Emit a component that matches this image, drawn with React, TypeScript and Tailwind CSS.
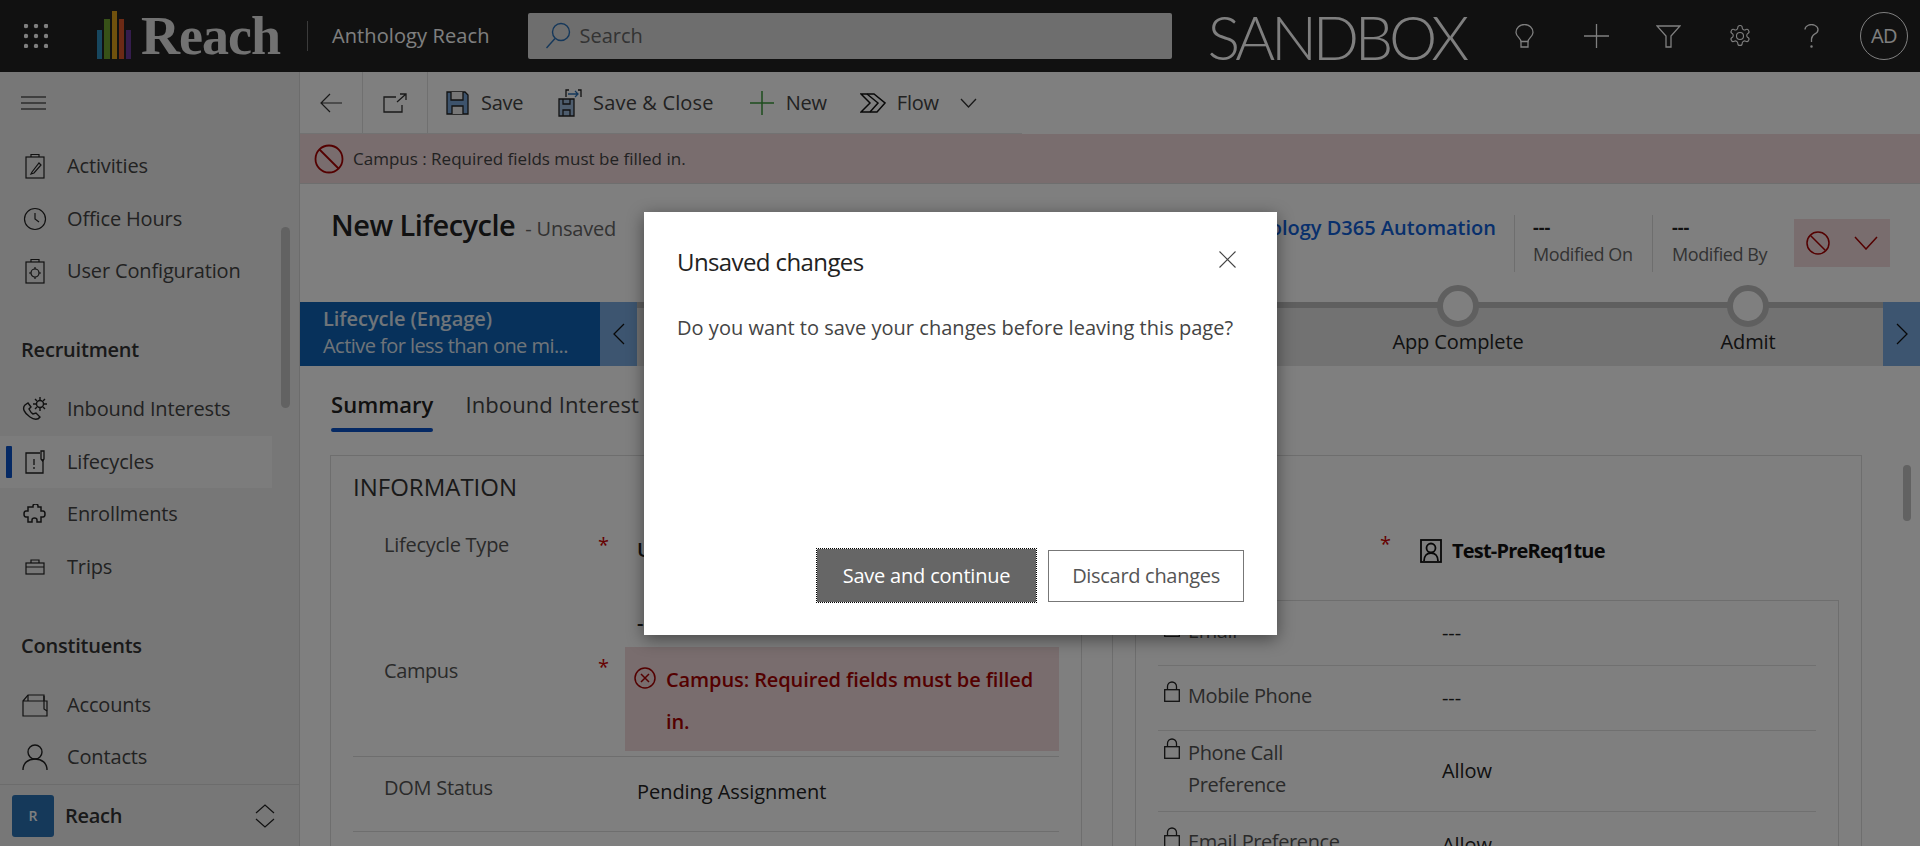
import React from "react";

const Ico = ({ s = 24, className = "", children, w, h, sw = 1.2 }: any) => (
  <svg width={w ?? s} height={h ?? s} viewBox={`0 0 ${w ?? s} ${h ?? s}`} fill="none" stroke="currentColor" strokeWidth={sw} className={className}>
    {children}
  </svg>
);

const NavItem = ({ label, active, icon }: { label: string; active?: boolean; icon: React.ReactNode }) => (
  <div className={`flex h-[52.5px] w-[272px] items-center ${active ? "bg-[#f9f9f9]" : ""}`}>
    <div className={`ml-[6px] h-[32px] w-[6px] rounded-[1px] ${active ? "bg-[#0a52c8]" : ""}`} />
    <div className="flex w-[55px] justify-center pr-[9px] text-[#222]">{icon}</div>
    <span className="text-[20px] text-[#444] tracking-[-0.15px]">{label}</span>
  </div>
);

const Lock = () => (
  <svg width="16" height="21" viewBox="0 0 16 21" fill="none" stroke="#222" strokeWidth="1.3" className="-mt-[4px] shrink-0">
    <rect x="0.7" y="8.7" width="14.6" height="11.6" />
    <path d="M3.5 8.5V5.5a4.5 4.5 0 0 1 9 0v3" />
  </svg>
);

const Field = ({ h, lines, value, hasBorder = true }: { h: string; lines: string[]; value: string; hasBorder?: boolean }) => (
  <div className={`flex items-center ${h} ${hasBorder ? "border-b border-[#e0e0e0]" : ""}`}>
    <div className="flex w-[284px] items-start gap-[8px] pl-[6px]">
      <Lock />
      <div className="text-[20px] leading-[32px] text-[#555] tracking-[-0.4px] -mt-[5px]">
        {lines.map((l) => (
          <div key={l}>{l}</div>
        ))}
      </div>
    </div>
    <div className="text-[20px] text-[#222] tracking-[-0.1px]">{value}</div>
  </div>
);

export default function App() {
  return (
    <div className="relative h-[846px] w-[1920px] overflow-hidden bg-white font-['Open_Sans',sans-serif]">
      {/* top bar */}
      <header className="flex h-[72px] items-center bg-[#222] text-white">
        <div className="flex w-[71px] shrink-0 justify-center">
          <svg width="24" height="24" viewBox="0 0 24 24" fill="#fff">
            {[2, 12, 22].flatMap((y) => [2, 12, 22].map((x) => <circle key={`${x}-${y}`} cx={x} cy={y} r="2.2" />))}
          </svg>
        </div>
        <div className="ml-[26px] -mt-[2px] flex h-[48px] shrink-0 items-end gap-[2px]">
          <div className="h-[29px] w-[5px] bg-[#2f8fbf]" />
          <div className="h-[40px] w-[6px] bg-[#6fa32f]" />
          <div className="h-[48px] w-[5px] bg-[#e0a21a]" />
          <div className="h-[40px] w-[5px] bg-[#d9552a]" />
          <div className="h-[29px] w-[5px] bg-[#6a3a9a]" />
        </div>
        <div className="ml-[10px] shrink-0 font-['Liberation_Serif',serif] text-[54px] font-bold leading-none tracking-[-1px] text-[#e4e4e4]">Reach</div>
        <div className="ml-[27px] h-[30px] w-px shrink-0 bg-[#777]" />
        <div className="ml-[24px] shrink-0 whitespace-nowrap text-[20px] tracking-[0.1px] text-white">Anthology Reach</div>
        <div className="ml-[38px] flex h-[46px] w-[644px] shrink-0 items-center rounded-[2px] bg-[#dcdcdc] pl-[17px]">
          <svg width="26" height="28" viewBox="0 0 26 28" fill="none" stroke="#2a6fb5" strokeWidth="1.4">
            <circle cx="16" cy="10" r="8.5" />
            <path d="M10 16.5 1.5 26" />
          </svg>
          <span className="ml-[9px] text-[20px] text-[#666]">Search</span>
        </div>
        <div className="ml-[36px] shrink-0 font-['Lato',sans-serif] text-[61px] font-light leading-none tracking-[-4.300px] text-white">SANDBOX</div>
        <div className="ml-auto flex shrink-0 items-center pr-[12px] text-white">
          <div className="flex w-[72px] justify-center">
            <svg width="19" height="24" viewBox="0 0 19 24" fill="none" stroke="currentColor" strokeWidth="1.3">
              <path d="M6 17.500c0-3-5-5-5-9a8.500 8 0 0 1 17 0c0 4-5 6-5 9z" />
              <path d="M6 17.500v5.500h7v-5.500" />
            </svg>
          </div>
          <div className="flex w-[72px] justify-center">
            <svg width="25" height="24" viewBox="0 0 25 24" stroke="currentColor" strokeWidth="1.3"><path d="M12.500 0v24M0 12h25" /></svg>
          </div>
          <div className="flex w-[72px] justify-center">
            <svg width="25" height="23" viewBox="0 0 25 23" fill="none" stroke="currentColor" strokeWidth="1.3"><path d="M1 1h23l-9 10v11h-5V11z" /></svg>
          </div>
          <div className="flex w-[72px] justify-center">
            <svg width="24" height="24" viewBox="0 0 24 24" fill="none" stroke="currentColor" strokeWidth="1.1">
              <path d="M12.2 1.500h-.4a2 2 0 0 0-2 2v.2a2 2 0 0 1-1 1.700l-.4.300a2 2 0 0 1-2 0l-.2-.1a2 2 0 0 0-2.700.7l-.2.4a2 2 0 0 0 .7 2.700l.2.100a2 2 0 0 1 1 1.700v.5a2 2 0 0 1-1 1.700l-.2.100a2 2 0 0 0-.7 2.700l.2.400a2 2 0 0 0 2.700.7l.2-.1a2 2 0 0 1 2 0l.4.300a2 2 0 0 1 1 1.700v.2a2 2 0 0 0 2 2h.4a2 2 0 0 0 2-2v-.2a2 2 0 0 1 1-1.700l.4-.3a2 2 0 0 1 2 0l.2.100a2 2 0 0 0 2.700-.7l.2-.4a2 2 0 0 0-.7-2.700l-.2-.1a2 2 0 0 1-1-1.700v-.5a2 2 0 0 1 1-1.700l.2-.100a2 2 0 0 0 .7-2.700l-.2-.4a2 2 0 0 0-2.700-.7l-.2.100a2 2 0 0 1-2 0l-.4-.300a2 2 0 0 1-1-1.700v-.2a2 2 0 0 0-2-2z" />
              <circle cx="12" cy="12" r="3.500" />
            </svg>
          </div>
          <div className="flex w-[71px] justify-center">
            <svg width="15" height="24" viewBox="0 0 15 24" fill="none" stroke="currentColor" strokeWidth="1.300"><path d="M1 5.500a6.500 5 0 1 1 10 4.300c-2.500 1.600-3.500 2.700-3.500 5.200v3" /><circle cx="7.500" cy="22.500" r="0.600" /></svg>
          </div>
          <div className="ml-[13px] flex h-[48px] w-[48px] items-center justify-center rounded-full border border-white text-[20px] tracking-[-0.5px]">AD</div>
        </div>
      </header>

      <div className="flex h-[774px]">
        {/* sidebar */}
        <aside className="relative flex w-[300px] shrink-0 flex-col border-r border-[#d8d8d8] bg-[#efefef]">
          <div className="flex h-[62px] shrink-0 items-center pl-[21px]">
            <svg width="25" height="14" viewBox="0 0 25 14" stroke="#111" strokeWidth="1.200"><path d="M0 1h25M0 7h25M0 13h25" /></svg>
          </div>
          <nav className="flex-1 pt-[6px]">
            <NavItem label="Activities" icon={<Ico w={20} h={26}><rect x="1" y="4" width="18" height="21" /><path d="M6 4V1.500h8V4M7 19l7-9 2 2-7 8-3 1z" /></Ico>} />
            <NavItem label="Office Hours" icon={<Ico s={24}><circle cx="12" cy="12" r="10.500" /><path d="M12 6v6l4 3" /></Ico>} />
            <NavItem label="User Configuration" icon={<Ico w={20} h={26}><rect x="1" y="4" width="18" height="21" /><path d="M6 4V1.500h8V4" /><circle cx="10" cy="15" r="4" /><path d="M10 9v2M10 19v2M4 15h2M14 15h2" /></Ico>} />
            <div className="mt-[26px] flex h-[52.5px] items-center pl-[21px] text-[20px] font-semibold tracking-[-0.2px] text-[#333]">Recruitment</div>
            <div className="mt-[7px]">
              <NavItem label="Inbound Interests" icon={<Ico w={26} h={24} sw={1.4}><path d="M3 8C0 11 2 16 8 20c4 3 8 3 10 0l-4-4-3 1c-2-1-3-3-4-5l2-2-3-4z" /><circle cx="18" cy="7" r="3.500" /><path d="M18 0v3M18 11v3M11 7h3M22 7h3M13 2l2 2M21 10l2 2M23 2l-2 2M13 12l2-2" /></Ico>} />
              <NavItem label="Lifecycles" active icon={<Ico w={20} h={24} sw={1.3}><path d="M15 3H1v20h17V9" /><path d="M16 9V1h3v8l-1.500 2z" /><path d="M9 9v6M9 17v2" /></Ico>} />
              <NavItem label="Enrollments" icon={<Ico w={24} h={20} sw={1.5}><path d="M5 3h5V2a2.500 2 0 0 1 5 0v1h3v4h2a2 3 0 0 1 0 6h-2v5h-4v-2a2.500 2 0 0 0-5 0v2H5v-5H3a2 3 0 0 1 0-6h2z" /></Ico>} />
              <NavItem label="Trips" icon={<Ico w={20} h={16}><rect x="1" y="4" width="18" height="11" /><path d="M6 4V1h8v3M1 8h18" /></Ico>} />
            </div>
            <div className="mt-[27px] flex h-[52.5px] items-center pl-[21px] text-[20px] font-semibold tracking-[-0.2px] text-[#333]">Constituents</div>
            <div className="mt-[6px]">
              <NavItem label="Accounts" icon={<Ico w={26} h={24}><path d="M1 8h24v15H1zM1 8l5-6h16v6" /><path d="M6 2v6M22 3v13l3 2" /></Ico>} />
              <NavItem label="Contacts" icon={<Ico s={28} sw={1.4}><circle cx="14" cy="9" r="7" /><path d="M2 27c0-7 5-11 12-11s12 4 12 11" /></Ico>} />
            </div>
          </nav>
          <div className="flex h-[63px] shrink-0 items-center border-t border-[#d8d8d8] pl-[12px]">
            <div className="flex h-[42px] w-[42px] items-center justify-center rounded-[3px] bg-[#2a72b5] text-[14px] font-semibold text-white">R</div>
            <span className="ml-[11px] text-[20px] font-semibold tracking-[-0.3px] text-[#333]">Reach</span>
            <svg className="ml-[133px]" width="20" height="26" viewBox="0 0 20 26" fill="none" stroke="#222" strokeWidth="1.200"><path d="M1 10 10 2l9 8M1 16l9 8 9-8" /></svg>
          </div>
          <div className="absolute left-[281px] top-[155px] h-[181px] w-[9px] rounded-full bg-[#c4c4c4]" />
        </aside>

        {/* main */}
        <main className="relative min-w-0 flex-1 overflow-hidden bg-white">
          <div className="flex h-[62px] w-[722px] items-center border-b border-[#e4e4e4] text-[20px] text-[#444]">
            <div className="flex h-full w-[63px] items-center justify-center border-r border-[#e0e0e0]">
              <svg width="22" height="20" viewBox="0 0 22 20" fill="none" stroke="#333" strokeWidth="1.200"><path d="M10 1 1 10l9 9M1 10h21" /></svg>
            </div>
            <div className="flex h-full w-[65px] items-center justify-center border-r border-[#e0e0e0]">
              <svg width="24" height="20" viewBox="0 0 24 20" fill="none" stroke="#333" strokeWidth="1.300"><path d="M13 4H1v15h18v-7M14 9l9-8M17 1h6v6" /></svg>
            </div>
            <div className="ml-[18px] flex items-center gap-[12px]">
              <svg width="23" height="24" viewBox="0 0 23 24" stroke="#222" strokeWidth="1.300"><path d="M1 1h18l3 3v19H1z" fill="#7aa7d8" /><path d="M5 1v8h12V1M6 23v-8h11v8" fill="#eee" /></svg>
              <span className="tracking-[-0.3px]">Save</span>
            </div>
            <div className="ml-[35px] flex items-center gap-[11px]">
              <svg width="24" height="28" viewBox="0 0 24 28" fill="none" stroke="#222" strokeWidth="1.300"><path d="M1 10h15v17H1z" fill="#9dbbdc" /><path d="M5 10v5h7v-5M5 27v-6h7v6" /><path d="M10 5h10M17 2l3 3-3 3" stroke="#2a6fb5" /><path d="M8 8V1h3M20 1h3v7" /></svg>
              <span className="tracking-[0.15px]">Save &amp; Close</span>
            </div>
            <div className="ml-[35px] flex items-center gap-[11px]">
              <svg width="26" height="26" viewBox="0 0 26 26" stroke="#3b9a3b" strokeWidth="1.500"><path d="M13 1v24M1 13h24" /></svg>
              <span className="tracking-[-0.2px]">New</span>
            </div>
            <div className="ml-[33px] flex items-center gap-[11px]">
              <svg width="26" height="20" viewBox="0 0 26 20" fill="none" stroke="#111" strokeWidth="1.500"><path d="M1 1h13l11 9-8 9H1l9-9z" /><path d="M7 1l11 9-8 9" /></svg>
              <span className="tracking-[-0.2px]">Flow</span>
              <svg className="ml-[10px]" width="17" height="10" viewBox="0 0 17 10" fill="none" stroke="#333" strokeWidth="1.300"><path d="M1 1l7.500 8L16 1" /></svg>
            </div>
          </div>

          <div className="flex h-[50px] items-center border-b border-[#ddd] bg-[#f2dadc] pl-[14px]">
            <svg width="30" height="30" viewBox="0 0 30 30" fill="none" stroke="#a80000" strokeWidth="1.800"><circle cx="15" cy="15" r="13.500" /><path d="M5.500 5.500l19 19" /></svg>
            <span className="ml-[9px] text-[17px] text-[#444]">Campus : Required fields must be filled in.</span>
          </div>

          <div className="flex h-[118px] items-start justify-between pl-[31px] pr-[30px]">
            <div className="mt-[19px] flex items-baseline gap-[10px]">
              <span className="text-[29px] font-semibold tracking-[-0.5px] text-[#222]">New Lifecycle</span>
              <span className="text-[20px] tracking-[-0.2px] text-[#666]">- Unsaved</span>
            </div>
            <div className="flex items-start">
              <div className="mt-[29px] pr-[18px] text-[20px] font-semibold text-[#1160d8]">Anthology D365 Automation</div>
              <div className="mt-[31px] h-[57px] w-[138px] border-l border-[#ddd] pl-[18px]">
                <div className="text-[18px] font-bold leading-[24px] text-[#222]">---</div>
                <div className="text-[18px] leading-[30px] tracking-[-0.4px] text-[#666]">Modified On</div>
              </div>
              <div className="mt-[31px] h-[57px] w-[142px] border-l border-[#ddd] pl-[19px]">
                <div className="text-[18px] font-bold leading-[24px] text-[#222]">---</div>
                <div className="text-[18px] leading-[30px] tracking-[-0.4px] text-[#666]">Modified By</div>
              </div>
              <div className="mt-[35px] flex h-[48px] w-[96px] items-center bg-[#f2dadc] pl-[12px]">
                <svg width="24" height="24" viewBox="0 0 24 24" fill="none" stroke="#a80000" strokeWidth="1.500"><circle cx="12" cy="12" r="11" /><path d="M4.500 4.500l15 15" /></svg>
                <svg className="ml-[24px]" width="24" height="14" viewBox="0 0 24 14" fill="none" stroke="#a80000" strokeWidth="1.500"><path d="M1 1l11 12L23 1" /></svg>
              </div>
            </div>
          </div>

          {/* BPF */}
          <div className="flex h-[64px]">
            <div className="w-[300px] shrink-0 bg-[#0f62b6] pl-[23px] pt-[3px]">
              <div className="text-[20px] font-semibold leading-[28px] tracking-[-0.05px] text-[#dfe8f2]">Lifecycle (Engage)</div>
              <div className="text-[20px] leading-[26px] tracking-[-0.55px] text-[#dfe8f2]">Active for less than one mi...</div>
            </div>
            <div className="flex w-[37px] shrink-0 items-center justify-center bg-[#7aabe0]">
              <svg width="12" height="22" viewBox="0 0 12 22" fill="none" stroke="#111" strokeWidth="1.300"><path d="M11 1 1 11l10 10" /></svg>
            </div>
            <div className="flex min-w-0 flex-1 border-t-[6px] border-[#bebebe] bg-[#e4e4e4] pl-[676px]">
              {["App Complete", "Admit"].map((s) => (
                <div key={s} className="flex w-[290px] shrink-0 flex-col items-center">
                  <div className="-mt-[23px] h-[42px] w-[42px] rounded-full border-[6px] border-[#bebebe] bg-white" />
                  <div className="text-[20px] tracking-[-0.1px] text-[#222]">{s}</div>
                </div>
              ))}
            </div>
            <div className="relative flex w-[37px] shrink-0 items-center justify-center bg-[#7aabe0]">
              <svg width="12" height="22" viewBox="0 0 12 22" fill="none" stroke="#111" strokeWidth="1.300"><path d="M1 1l10 10L1 21" /></svg>
            </div>
          </div>

          {/* Tabs */}
          <div className="flex h-[65px] items-start gap-[32px] pl-[31px] pt-[22px] text-[22px] tracking-[0.05px]">
            <div className="relative font-semibold text-[#222]">
              Summary
              <div className="absolute -bottom-[11px] left-0 right-0 h-[4px] rounded-full bg-[#0a52c8]" />
            </div>
            <div className="tracking-[0.1px] text-[#444]">Inbound Interest</div>
          </div>

          <div className="mt-[24px] flex gap-[30px] pl-[30px]">
            {/* left card */}
            <section className="h-[500px] w-[752px] shrink-0 border border-[#dcdcdc] px-[22px]">
              <div className="pt-[14px] text-[24px] leading-[34px] text-[#333]">INFORMATION</div>
              <div className="flex h-[143px] pt-[6px]">
                <div className="w-[245px] pl-[31px] pt-[20px] text-[20px] tracking-[-0.25px] text-[#555]">Lifecycle Type</div>
                <div className="w-[39px] pt-[20px] text-[20px] text-[#c00]">*</div>
                <div className="pt-[25px] text-[20px] font-semibold text-[#222]">
                  U<div className="mt-[43px]">---</div>
                </div>
              </div>
              <div className="flex h-[110px] border-b border-[#dcdcdc]">
                <div className="w-[245px] pl-[31px] pt-[9px] text-[20px] tracking-[-0.4px] text-[#555]">Campus</div>
                <div className="w-[27px] pt-[5px] text-[20px] text-[#c00]">*</div>
                <div className="mb-[5px] flex flex-1 items-start bg-[#f2dadc] pl-[9px] pt-[17px]">
                  <svg className="mt-[3px] shrink-0" width="22" height="22" viewBox="0 0 22 22" fill="none" stroke="#a80000" strokeWidth="1.500"><circle cx="11" cy="11" r="10" /><path d="M7 7l8 8M15 7l-8 8" /></svg>
                  <div className="ml-[10px] -mt-[5px] max-w-[375px] text-[20px] font-semibold leading-[42px] tracking-[-0.1px] text-[#a80000]">Campus: Required fields must be filled in.</div>
                </div>
              </div>
              <div className="flex h-[75px] items-center border-b border-[#dcdcdc]">
                <div className="w-[250px] pl-[31px] -mt-[13px] text-[20px] tracking-[-0.25px] text-[#555]">DOM Status</div>
                <div className="w-[34px]" />
                <div className="-mt-[5px] text-[20px] font-medium tracking-[-0.05px] text-[#222]">Pending Assignment</div>
              </div>
            </section>

            {/* right card */}
            <section className="h-[500px] w-[750px] shrink-0 border border-[#dcdcdc] px-[22px]">
              <div className="flex h-[144px] pt-[83px]">
                <div className="w-[245px] pt-[6px]" />
                <div className="w-[40px] -mt-[10px] text-[20px] text-[#c00]">*</div>
                <svg className="shrink-0" width="22" height="24" viewBox="0 0 22 24" fill="none" stroke="#111" strokeWidth="1.800"><rect x="1" y="1" width="20" height="22" /><circle cx="11" cy="9" r="4.500" /><path d="M4 22c0-5 3-8 7-8s7 3 7 8" /></svg>
                <div className="ml-[10px] text-[20px] font-bold leading-[24px] tracking-[-0.8px] text-[#111]">Test-PreReq1tue</div>
              </div>
              <div className="h-[300px] border border-[#dcdcdc] px-[22px]">
                <Field h="h-[65px]" lines={["Email"]} value="---" />
                <Field h="h-[65px]" lines={["Mobile Phone"]} value="---" />
                <Field h="h-[81px]" lines={["Phone Call", "Preference"]} value="Allow" />
                <Field h="h-[65px]" lines={["Email Preference"]} value="Allow" hasBorder={false} />
              </div>
            </section>
          </div>

          <div className="absolute left-[1603px] top-[393px] h-[56px] w-[8px] rounded-full bg-[#c4c4c4]" />
        </main>
      </div>

      {/* overlay */}
      <div className="absolute inset-0 bg-black/50" />
      <div className="absolute left-[644px] top-[212px] flex h-[423px] w-[633px] flex-col bg-white pl-[33px] pr-[33px] shadow-[0_4px_16px_rgba(0,0,0,0.45)]">
        <div className="flex items-start justify-between pt-[32px]">
          <div className="text-[24px] leading-[36px] tracking-[-0.6px] text-[#222]">Unsaved changes</div>
          <svg className="mr-[8px] mt-[7px]" width="17" height="17" viewBox="0 0 17 17" stroke="#444" strokeWidth="1.100"><path d="M0.500 0.500l16 16M16.500 0.500l-16 16" /></svg>
        </div>
        <div className="mt-[33px] text-[20px] tracking-[0.03px] text-[#444]">Do you want to save your changes before leaving this page?</div>
        <div className="mt-auto mb-[32px] flex items-center justify-end gap-[11px]">
          <button className="h-[55px] w-[221px] border border-dotted border-black bg-[#666] bg-clip-padding text-[20px] tracking-[-0.2px] text-white">Save and continue</button>
          <button className="h-[52px] w-[196px] border border-[#777] bg-white text-[20px] tracking-[-0.3px] text-[#555]">Discard changes</button>
        </div>
      </div>
    </div>
  );
}
